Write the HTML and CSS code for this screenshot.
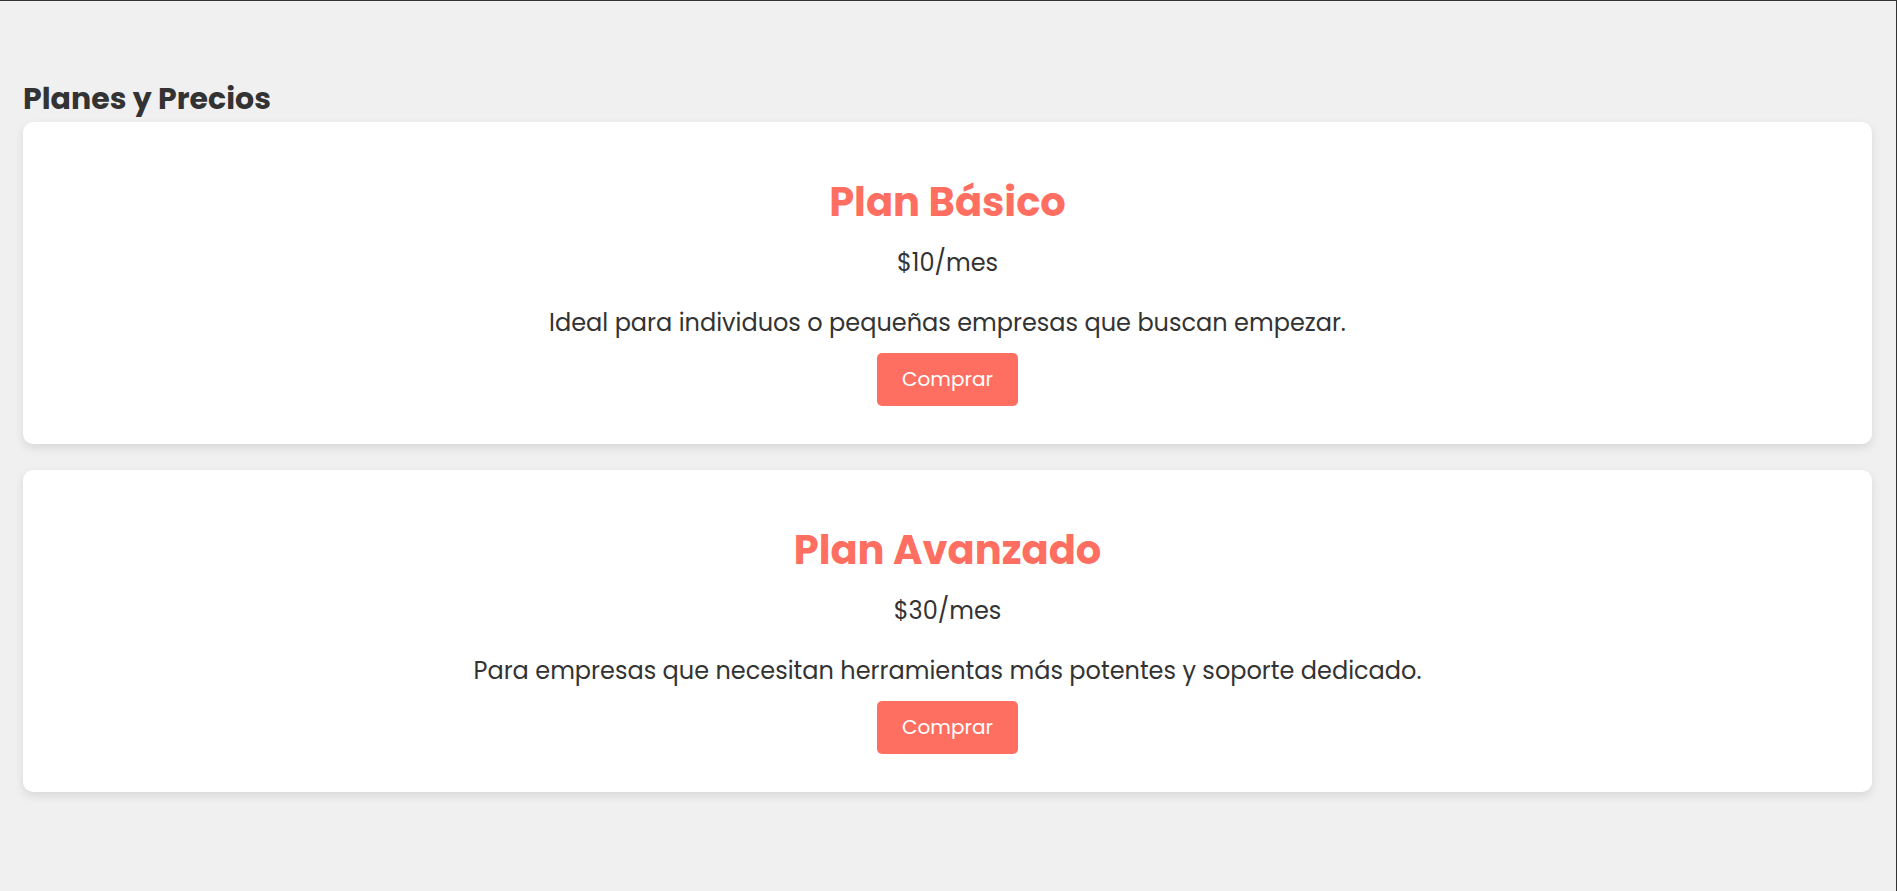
FILE: index.html
```html
<!DOCTYPE html>
<html lang="es">
<head>
<meta charset="utf-8">
<title>Planes y Precios</title>
<link rel="stylesheet" href="styles.css">
</head>
<body>
<div class="frame">
  <section class="pricing">
    <h1 class="section-title">Planes y Precios</h1>
    <div class="plans">
      <article class="plan">
        <h2 class="plan-name">Plan Básico</h2>
        <p class="plan-price">$10/mes</p>
        <p class="plan-desc">Ideal para individuos o pequeñas empresas que buscan empezar.</p>
        <button class="buy-btn" type="button">Comprar</button>
      </article>
      <article class="plan">
        <h2 class="plan-name">Plan Avanzado</h2>
        <p class="plan-price">$30/mes</p>
        <p class="plan-desc">Para empresas que necesitan herramientas más potentes y soporte dedicado.</p>
        <button class="buy-btn" type="button">Comprar</button>
      </article>
    </div>
  </section>
</div>
</body>
</html>
```
FILE: styles.css
```css
html, body {
  margin: 0;
  padding: 0;
}

body {
  background: #f0f0f0;
  color: #333333;
  font-family: "Poppins", Inter, "Noto Sans", sans-serif;
}

.frame {
  box-sizing: border-box;
  min-height: 100vh;
  border-top: 1px solid #333333;
  border-right: 1px solid #333333;
}

.pricing {
  padding: 80px 24px 0 23px;
}

.section-title {
  margin: 0 0 5px 0;
  font-size: 30px;
  line-height: 36px;
  font-weight: 700;
  color: #333333;
}

.plans {
  display: flex;
  flex-direction: column;
  gap: 26px;
}

.plan {
  background: #ffffff;
  border-radius: 10px;
  box-shadow: 0 4px 10px rgba(0, 0, 0, 0.1);
  padding: 55px 24px 38px;
  display: flex;
  flex-direction: column;
  align-items: center;
  text-align: center;
}

.plan-name {
  margin: 0;
  font-size: 40px;
  line-height: 50px;
  font-weight: 700;
  color: #ff6f61;
}

.plan-price {
  margin: 21px 0 0 0;
  font-size: 24px;
  line-height: 30px;
}

.plan-desc {
  margin: 30px 0 0 0;
  font-size: 24px;
  line-height: 30px;
}

.buy-btn {
  margin-top: 15px;
  height: 53px;
  padding: 0 25px;
  border: none;
  border-radius: 5px;
  background: #ff6f61;
  color: #ffffff;
  font-family: inherit;
  font-size: 20px;
  line-height: 53px;
  cursor: pointer;
}
```
